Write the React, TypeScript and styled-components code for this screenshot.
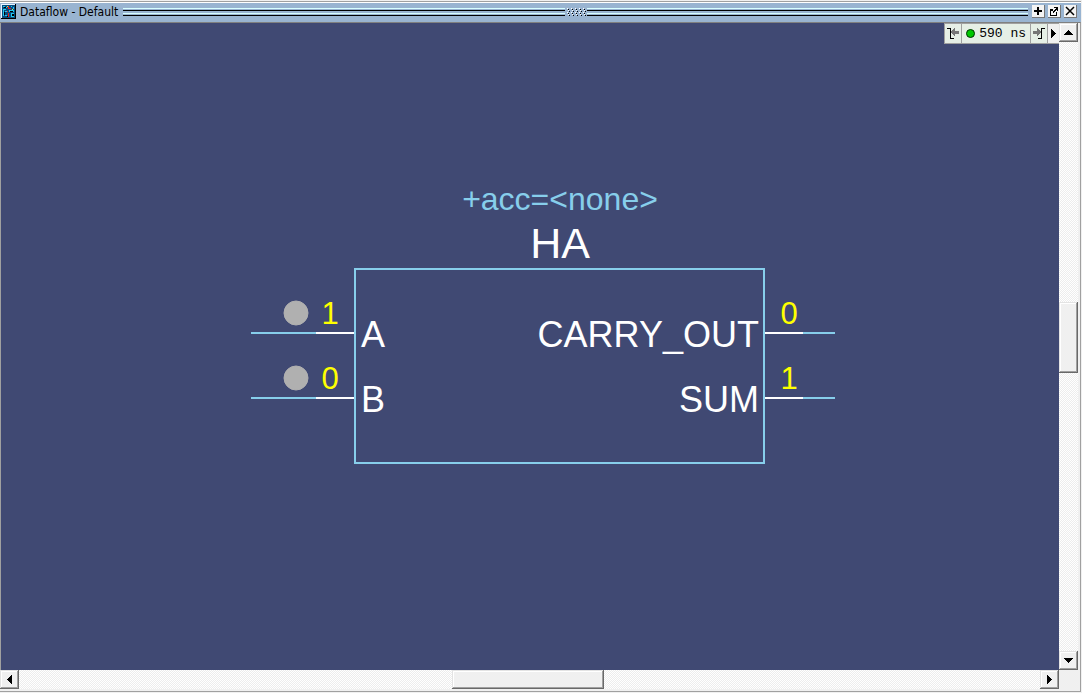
import React from "react";
import styled, { createGlobalStyle } from "styled-components";

const GlobalStyle = createGlobalStyle`
  *, *::before, *::after { box-sizing: border-box; }
  html, body, #root { height: 100%; }
  body { margin: 0; background: #f0f0f0; overflow: hidden; }
  button { font: inherit; margin: 0; padding: 0; }
`;

const Window = styled.main`
  display: flex;
  flex-direction: column;
  height: 100%;
  border-top: 1px solid #f0f0f0;
  border-right: 1px solid #f0f0f0;
  border-bottom: 1px solid #f0f0f0;
`;

const TitleBar = styled.header`
  display: flex;
  align-items: center;
  flex: none;
  height: 21px;
  padding: 1px 1px 2px 1px;
  border-top: 1px solid #a0a0a0;
  background: #99b4d1;
  box-shadow: inset 0 1px #ffffff;
`;

const Title = styled.h1`
  margin: 0 5px 0 4px;
  padding-top: 2px;
  font-family: "DejaVu Sans Condensed", "DejaVu Sans", sans-serif;
  font-size: 12px;
  line-height: 17px;
  font-weight: 400;
  font-stretch: condensed;
  white-space: nowrap;
  color: #000000;
`;

const GripLine = styled.span`
  flex: 1;
  height: 9px;
  background: linear-gradient(
    #99b4d1 0 1px, #d8ffff 1px 2px, #99b4d1 2px 3px, #000000 3px 4px, #99b4d1 4px 6px,
    #d8ffff 6px 7px, #99b4d1 7px 8px, #000000 8px 9px
  );
`;

const GripDots = styled.svg`
  flex: none;
  margin: 0 1px;
`;

const TitleButtons = styled.div`
  display: flex;
  gap: 3px;
  margin: 0 3px 0 4px;
`;

const TitleButton = styled.button`
  display: flex;
  width: 13px;
  height: 13px;
  border: 0;
  border-right: 1px solid #777777;
  border-bottom: 1px solid #777777;
  background: #f4f4f4;
`;

const Body = styled.div`
  display: grid;
  flex: 1;
  min-height: 0;
  grid-template-columns: minmax(0, 1fr) 19px;
  grid-template-rows: minmax(0, 1fr) 19px;
  border-style: solid;
  border-width: 1px 1px 1px 0;
  border-color: #808080 #a0a0a0 #a0a0a0;
  padding: 0 2px 2px 0;
  background: #f0f0f0;
`;

const Canvas = styled.section`
  position: relative;
  display: flex;
  align-items: center;
  justify-content: center;
  overflow: hidden;
  padding: 0 0 0 28px;
  border-left: 1px solid #a0a0a0;
  background: #404973;
`;

const Schematic = styled.svg`
  flex: none;
  font-family: "Liberation Sans", Arial, sans-serif;
`;

const TimeBar = styled.div`
  position: absolute;
  top: 0;
  right: 0;
  display: flex;
  height: 21px;
  border-top: 1px solid #a0a0a0;
  border-left: 1px solid #a0a0a0;
  border-bottom: 1px solid #a0a0a0;
  background: #e6efe6;
`;

const TimeButton = styled.button<{ $plain?: boolean }>`
  display: flex;
  align-items: center;
  justify-content: center;
  width: ${(p) => (p.$plain ? 11 : 17)}px;
  border: 0;
  border-right: ${(p) => (p.$plain ? "0" : "1px solid #a0a0a0")};
  background: ${(p) => (p.$plain ? "#f0f0f0" : "#e6efe6")};
`;

const TimeValue = styled.div`
  display: flex;
  align-items: center;
  gap: 4px;
  padding: 0 4px;
  border-right: 1px solid #a0a0a0;
  font-family: "Liberation Mono", monospace;
  font-size: 13px;
  line-height: 16px;
  white-space: pre;
  color: #000000;
`;

const StatusDot = styled.span`
  width: 9px;
  height: 9px;
  border: 1px solid #003300;
  border-radius: 50%;
  background: #00c800;
`;

const ScrollBar = styled.div<{ $vertical?: boolean }>`
  display: flex;
  flex-direction: ${(p) => (p.$vertical ? "column" : "row")};
  background: repeating-conic-gradient(#ededed 0 25%, #ffffff 0 50%) 0 0 / 2px 2px;
`;

const ScrollArrow = styled.button`
  display: flex;
  align-items: center;
  justify-content: center;
  flex: none;
  width: 19px;
  height: 19px;
  border: 0;
  background: #f0f0f0;
  box-shadow: inset -1px -1px #696969, inset 1px 1px #e3e3e3,
    inset -2px -2px #a0a0a0, inset 2px 2px #ffffff;
`;

const Gap = styled.span<{ $share: number }>`
  flex: ${(p) => p.$share} 1 0;
`;

const Thumb = styled.span<{ $share: number }>`
  flex: ${(p) => p.$share} 1 0;
  background: #f0f0f0;
  box-shadow: inset -1px -1px #696969, inset 1px 1px #e3e3e3,
    inset -2px -2px #a0a0a0, inset 2px 2px #ffffff;
`;

const Corner = styled.div`
  background: #f0f0f0;
`;

const arrows = {
  up: "M5 0h1v1h1v1h1v1h1v1h1v1H1V4h1V3h1V2h1V1h1z",
  down: "M1 0h9v1H9v1H8v1H7v1H6v1H5V4H4V3H3V2H2V1H1z",
  left: "M5 0v9H4V8H3V7H2V6H1V5H0V4h1V3h1V2h1V1h1V0z",
  right: "M0 0v9h1V8h1V7h1V6h1V5h1V4H4V3H3V2H2V1H1V0z",
};

type Direction = keyof typeof arrows;

const Arrow = ({ direction }: { direction: Direction }) => {
  const upright = direction === "up" || direction === "down";
  return (
    <svg width={upright ? 11 : 5} height={upright ? 5 : 9} shapeRendering="crispEdges" aria-hidden="true">
      <path d={arrows[direction]} />
    </svg>
  );
};

const DataflowIcon = () => (
  <svg width="15" height="15" shapeRendering="crispEdges" aria-hidden="true">
    <path fill="#000000" d="M0 0h15v15H0z" />
    <path fill="#e8f4ff" d="M0 0h14v1H1v13H0z" />
    <path fill="#064c80" d="M1 1h13v13H1z" />
    <path
      fill="#22c8f0"
      d="M2 2h2v1H2zM5 3h1v1H5zM10 2h1v1h-1zM12 3h1v2h-1zM2 5h3v1H3v6H2zM4 7h2v1H4zM4 11h2v1H4zM8 6h5v2h-1v-1H9v1H8zM10 9h3v1h-2v2h2v1h-3z"
    />
    <path fill="#000000" d="M3 3h2v1H3zM3 8h1v3H3zM9 7h3v1H9zM11 10h2v2h-2zM6 12h1v1H6z" />
    <path fill="#e02020" d="M7 2h1v2h2v1H7zM7 9h1v4H7zM6 7h1v1H6z" />
    <path fill="#f0e040" d="M6 2h1v1H6zM11 5h1v1h-1z" />
  </svg>
);

const dots: number[][] = [];
for (let row = 0; row < 4; row++)
  for (let column = 0; column < 5; column++) dots.push([1 + column * 4 + (row % 2), row * 2]);

const EdgeIcon = ({ next }: { next?: boolean }) => (
  <svg width="14" height="13" shapeRendering="crispEdges" aria-hidden="true">
    {next ? (
      <>
        <path fill="#777777" d="M1 4h4V1h1v1h1v1h1v1h1v2H8v1H7v1H6v1H5V7H1z" />
        <path d="M6 11h3V1h4v1h-3v10H6z" />
      </>
    ) : (
      <>
        <path d="M1 1h4v10h3v1H4V2H1z" />
        <path fill="#777777" d="M13 4H9V1H8v1H7v1H6v1H5v2h1v1h1v1h1v1h1V7h4z" />
      </>
    )}
  </svg>
);

const inputs = [
  { name: "A", value: "1", y: 147 },
  { name: "B", value: "0", y: 212 },
];

const outputs = [
  { name: "CARRY_OUT", value: "0", y: 147 },
  { name: "SUM", value: "1", y: 212 },
];

const HalfAdder = () => (
  <Schematic width="586" height="335" viewBox="0 -7 586 335" role="img" aria-label="Half adder HA">
    <text x="309" y="24" fontSize="32" textAnchor="middle" fill="#87ceeb">
      {"+acc=<none>"}
    </text>
    <text x="309" y="72" fontSize="43" textAnchor="middle" fill="#ffffff">
      HA
    </text>
    {inputs.map((pin) => (
      <g key={pin.name}>
        <path stroke="#87ceeb" strokeWidth="2" d={`M0 ${pin.y}h65`} />
        <path stroke="#ffffff" strokeWidth="2" d={`M65 ${pin.y}h38`} />
        <circle cx="45" cy={pin.y - 20} r="12" fill="#b0b0b0" stroke="#b0b0b0" />
        <text x="79" y={pin.y - 9} fontSize="31" textAnchor="middle" fill="#ffff00">
          {pin.value}
        </text>
        <text x="110" y={pin.y + 14} fontSize="36" fill="#ffffff">
          {pin.name}
        </text>
      </g>
    ))}
    {outputs.map((pin) => (
      <g key={pin.name}>
        <path stroke="#ffffff" strokeWidth="2" d={`M514 ${pin.y}h38`} />
        <path stroke="#87ceeb" strokeWidth="2" d={`M552 ${pin.y}h32`} />
        <text x="538" y={pin.y - 9} fontSize="31" textAnchor="middle" fill="#ffff00">
          {pin.value}
        </text>
        <text x="508" y={pin.y + 14} fontSize="36" textAnchor="end" fill="#ffffff">
          {pin.name}
        </text>
      </g>
    ))}
    <rect x="104" y="83" width="409" height="194" fill="none" stroke="#87ceeb" strokeWidth="2" />
  </Schematic>
);

export default function App() {
  return (
    <>
      <GlobalStyle />
      <Window>
        <TitleBar>
          <DataflowIcon />
          <Title>Dataflow - Default</Title>
          <GripLine />
          <GripDots width="20" height="9" shapeRendering="crispEdges" aria-hidden="true">
            {dots.map(([x, y]) => (
              <React.Fragment key={`${x}-${y}`}>
                <rect x={x} y={y + 1} width="1" height="1" fill="#ffffff" />
                <rect x={x + 1} y={y + 2} width="1" height="1" fill="#000000" />
              </React.Fragment>
            ))}
          </GripDots>
          <GripLine />
          <TitleButtons>
            <TitleButton aria-label="Zoom pane">
              <svg width="12" height="12" shapeRendering="crispEdges">
                <path d="M5 2h2v3h3v2H7v3H5V7H2V5h3z" />
              </svg>
            </TitleButton>
            <TitleButton aria-label="Undock">
              <svg width="12" height="12" shapeRendering="crispEdges">
                <path d="M2 4h3v2H3v4h5V7h1v4H2zM6 2h4v4H9V5H8v1H7v1H6v1H5V6h1V5h1V4h1V3H6z" />
              </svg>
            </TitleButton>
            <TitleButton aria-label="Close">
              <svg width="12" height="12">
                <path d="M2 2l8 8M10 2l-8 8" stroke="#000000" strokeWidth="1.500" />
              </svg>
            </TitleButton>
          </TitleButtons>
        </TitleBar>
        <Body>
          <Canvas>
            <HalfAdder />
            <TimeBar>
              <TimeButton aria-label="Previous transition">
                <EdgeIcon />
              </TimeButton>
              <TimeValue>
                <StatusDot />
                590 ns
              </TimeValue>
              <TimeButton aria-label="Next transition">
                <EdgeIcon next />
              </TimeButton>
              <TimeButton $plain aria-label="More">
                <Arrow direction="right" />
              </TimeButton>
            </TimeBar>
          </Canvas>
          <ScrollBar $vertical>
            <ScrollArrow aria-label="Scroll up">
              <Arrow direction="up" />
            </ScrollArrow>
            <Gap $share={260} />
            <Thumb $share={71} />
            <Gap $share={278} />
            <ScrollArrow aria-label="Scroll down">
              <Arrow direction="down" />
            </ScrollArrow>
          </ScrollBar>
          <ScrollBar>
            <ScrollArrow aria-label="Scroll left">
              <Arrow direction="left" />
            </ScrollArrow>
            <Gap $share={433} />
            <Thumb $share={151} />
            <Gap $share={436} />
            <ScrollArrow aria-label="Scroll right">
              <Arrow direction="right" />
            </ScrollArrow>
          </ScrollBar>
          <Corner />
        </Body>
      </Window>
    </>
  );
}
